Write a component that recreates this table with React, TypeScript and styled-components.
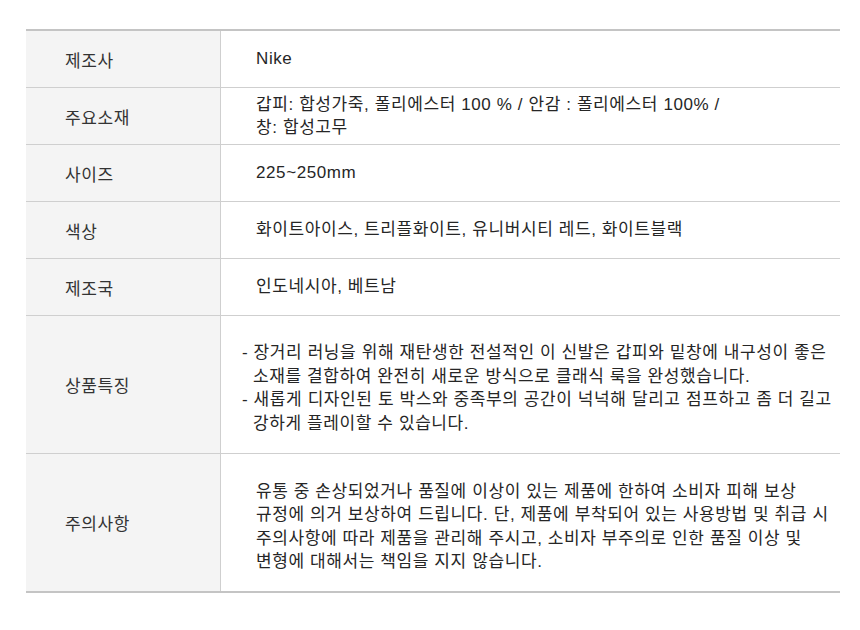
import React from "react";
import styled, { createGlobalStyle } from "styled-components";

const Global = createGlobalStyle`
  html, body { margin: 0; padding: 0; background: #ffffff; }
  body { font-family: "Liberation Sans", "Noto Sans CJK KR", sans-serif; color: #333333; }
`;

const Page = styled.div`
  padding: 29px 20px 20px 26px;
`;

const Table = styled.div`
  width: 814px;
  border-top: 2px solid #c4c4c4;
  border-bottom: 2px solid #c4c4c4;
`;

const Row = styled.div<{ $h: number }>`
  display: grid;
  grid-template-columns: 195px 1fr;
  min-height: ${(p) => p.$h}px;
  border-bottom: 1px solid #cfcfcf;
  &:last-child { border-bottom: none; }
`;

const Label = styled.div`
  display: flex;
  align-items: center;
  padding-left: 39px;
  background: #f4f4f4;
  border-right: 1px solid #cfcfcf;
  font-size: 17px;
  letter-spacing: 0.6px;
  color: #333333;
`;

const Value = styled.div<{ $pl?: number; $pt?: number }>`
  display: flex;
  align-items: center;
  padding-left: ${(p) => p.$pl ?? 35}px;
  padding-top: ${(p) => p.$pt ?? 0}px;
  font-size: 17px;
  letter-spacing: 0.6px;
  line-height: 23.5px;
  color: #262626;
  white-space: nowrap;
`;

const Block = styled.div``;

const Bullet = styled.div`
  padding-left: 11px;
  text-indent: -11px;
`;

const rows: { label: string; h: number; value: React.ReactNode; pl?: number; pt?: number }[] = [
  { label: "제조사", h: 56, value: "Nike" },
  {
    label: "주요소재",
    h: 56,
    value: (
      <Block>
        갑피: 합성가죽, 폴리에스터 100 % / 안감 : 폴리에스터 100% /<br />창: 합성고무
      </Block>
    ),
  },
  { label: "사이즈", h: 56, value: "225~250mm" },
  { label: "색상", h: 56, value: "화이트아이스, 트리플화이트, 유니버시티 레드, 화이트블랙" },
  { label: "제조국", h: 56, value: "인도네시아, 베트남" },
  {
    label: "상품특징",
    h: 137,
    pl: 21,
    pt: 7,
    value: (
      <Block>
        <Bullet>
          - 장거리 러닝을 위해 재탄생한 전설적인 이 신발은 갑피와 밑창에 내구성이 좋은
          <br />
          소재를 결합하여 완전히 새로운 방식으로 클래식 룩을 완성했습니다.
        </Bullet>
        <Bullet>
          - 새롭게 디자인된 토 박스와 중족부의 공간이 넉넉해 달리고 점프하고 좀 더 길고
          <br />
          강하게 플레이할 수 있습니다.
        </Bullet>
      </Block>
    ),
  },
  {
    label: "주의사항",
    h: 137,
    pt: 8,
    value: (
      <Block>
        유통 중 손상되었거나 품질에 이상이 있는 제품에 한하여 소비자 피해 보상
        <br />
        규정에 의거 보상하여 드립니다. 단, 제품에 부착되어 있는 사용방법 및 취급 시
        <br />
        주의사항에 따라 제품을 관리해 주시고, 소비자 부주의로 인한 품질 이상 및
        <br />
        변형에 대해서는 책임을 지지 않습니다.
      </Block>
    ),
  },
];

export default function App() {
  return (
    <Page>
      <Global />
      <Table>
        {rows.map((r) => (
          <Row key={r.label} $h={r.h}>
            <Label>{r.label}</Label>
            <Value $pl={r.pl} $pt={r.pt}>{r.value}</Value>
          </Row>
        ))}
      </Table>
    </Page>
  );
}
